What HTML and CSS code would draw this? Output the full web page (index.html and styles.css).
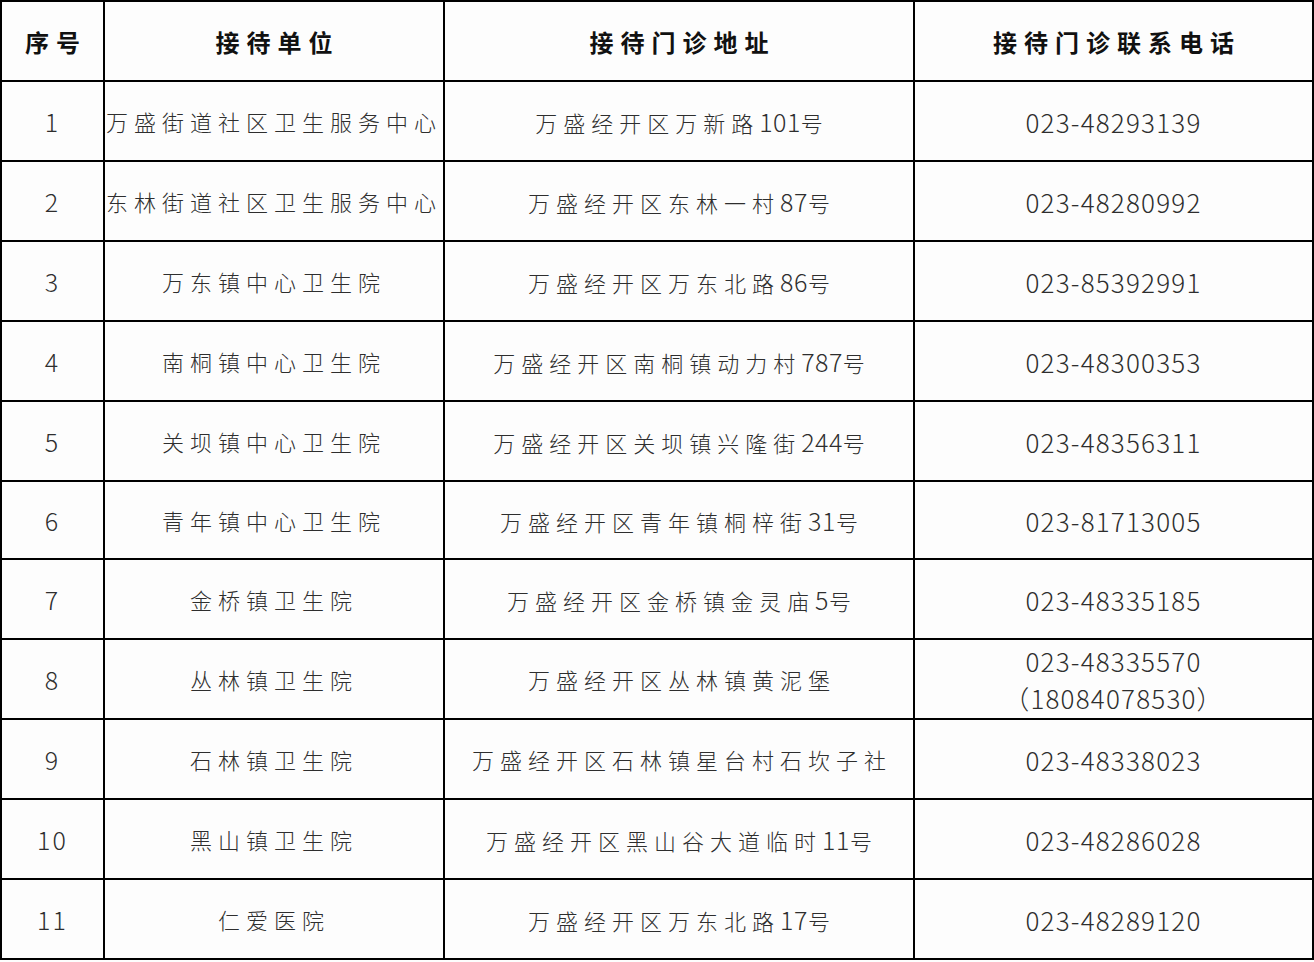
FILE: index.html
```html
<!DOCTYPE html>
<html lang="zh">
<head>
<meta charset="utf-8">
<link rel="stylesheet" href="styles.css">
</head>
<body>
<table class="tbl">
  <colgroup>
    <col class="c1"><col class="c2"><col class="c3"><col class="c4">
  </colgroup>
  <thead>
    <tr class="hd">
      <th>序号</th><th>接待单位</th><th>接待门诊地址</th><th>接待门诊联系电话</th>
    </tr>
  </thead>
  <tbody>
    <tr><td class="n">1</td><td class="u">万盛街道社区卫生服务中心</td><td class="a">万盛经开区万新路<span class="d">101</span>号</td><td class="p">023-48293139</td></tr>
    <tr><td class="n">2</td><td class="u">东林街道社区卫生服务中心</td><td class="a">万盛经开区东林一村<span class="d">87</span>号</td><td class="p">023-48280992</td></tr>
    <tr><td class="n">3</td><td class="u">万东镇中心卫生院</td><td class="a">万盛经开区万东北路<span class="d">86</span>号</td><td class="p">023-85392991</td></tr>
    <tr><td class="n">4</td><td class="u">南桐镇中心卫生院</td><td class="a">万盛经开区南桐镇动力村<span class="d">787</span>号</td><td class="p">023-48300353</td></tr>
    <tr><td class="n">5</td><td class="u">关坝镇中心卫生院</td><td class="a">万盛经开区关坝镇兴隆街<span class="d">244</span>号</td><td class="p">023-48356311</td></tr>
    <tr class="short"><td class="n">6</td><td class="u">青年镇中心卫生院</td><td class="a">万盛经开区青年镇桐梓街<span class="d">31</span>号</td><td class="p">023-81713005</td></tr>
    <tr><td class="n">7</td><td class="u">金桥镇卫生院</td><td class="a">万盛经开区金桥镇金灵庙<span class="d">5</span>号</td><td class="p">023-48335185</td></tr>
    <tr><td class="n">8</td><td class="u">丛林镇卫生院</td><td class="a">万盛经开区丛林镇黄泥堡</td><td class="p two">023-48335570<br>（18084078530）</td></tr>
    <tr><td class="n">9</td><td class="u">石林镇卫生院</td><td class="a">万盛经开区石林镇星台村石坎子社</td><td class="p">023-48338023</td></tr>
    <tr><td class="n">10</td><td class="u">黑山镇卫生院</td><td class="a">万盛经开区黑山谷大道临时<span class="d">11</span>号</td><td class="p">023-48286028</td></tr>
    <tr><td class="n">11</td><td class="u">仁爱医院</td><td class="a">万盛经开区万东北路<span class="d">17</span>号</td><td class="p">023-48289120</td></tr>
  </tbody>
</table>
</body>
</html>
```
FILE: styles.css
```css
html, body {
  margin: 0;
  padding: 0;
  background: #fdfdfd;
}
body {
  font-family: "Noto Sans CJK SC", "Noto Sans", sans-serif;
  color: #2e2e2e;
}
.tbl {
  border-collapse: collapse;
  width: 1312px;
  table-layout: fixed;
}
.c1 { width: 103px; }
.c2 { width: 340px; }
.c3 { width: 470px; }
.c4 { width: 399px; }
.tbl th, .tbl td {
  border: 2px solid #000;
  text-align: center;
  vertical-align: middle;
  padding: 0;
  height: 78px;
  white-space: nowrap;
}
.tbl tr.short td { height: 76px; }
.tbl th {
  font-size: 24px;
  font-weight: 700;
  color: #111;
  letter-spacing: 7px;
  text-indent: 7px;
}
.n {
  font-size: 25px;
  font-weight: 300;
  letter-spacing: 2px;
}
.u {
  font-size: 22px;
  font-weight: 300;
  letter-spacing: 6px;
}
.a {
  font-size: 22px;
  font-weight: 300;
  letter-spacing: 6px;
  text-indent: 6px;
}
.a .d {
  font-size: 25px;
  letter-spacing: 0.5px;
}
.p {
  font-size: 26px;
  font-weight: 300;
  letter-spacing: 1.2px;
}
.p.two {
  line-height: 37px;
}
```
